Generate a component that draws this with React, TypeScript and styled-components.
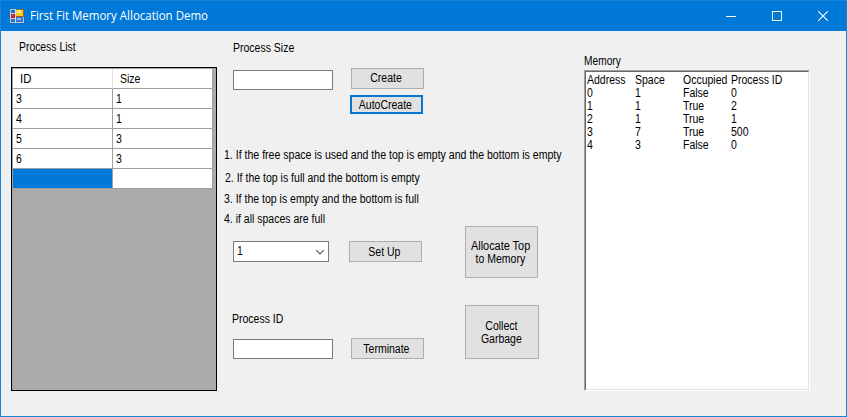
import React from 'react';
import styled, { createGlobalStyle } from 'styled-components';

const Global = createGlobalStyle`
  * { box-sizing: border-box; }
  html, body { margin: 0; padding: 0; }
  body { font: 12px/13px "Liberation Sans", Arial, sans-serif; color: #000; }
`;

const Window = styled.div`
  width: 847px;
  height: 417px;
  border: 1px solid #1883d7;
  background: #f0f0f0;
  overflow: hidden;
`;

const TitleBar = styled.header`
  display: flex;
  align-items: center;
  height: 30px;
  padding-left: 9px;
  background: #0078d7;
  color: #fff;
`;

const Title = styled.div<{ $scale: number }>`
  flex: 1;
  margin-left: 6px;
  font: 12px/16px "Open Sans", "Segoe UI", sans-serif;
  white-space: nowrap;
  transform: scaleX(${p => p.$scale});
  transform-origin: left;
`;

const Caption = styled.div`
  display: flex;
  width: 46px;
  height: 30px;
  align-items: center;
  justify-content: center;
`;

const Text = styled.span<{ $scale?: number; $origin?: string }>`
  display: block;
  height: 13px;
  white-space: nowrap;
  transform: scaleX(${p => p.$scale ?? 0.875});
  transform-origin: ${p => p.$origin ?? 'left'};
`;

const Body = styled.main`
  display: flex;
  align-items: flex-start;
  height: 385px;
`;

const ProcessPane = styled.section`
  width: 206px;
  margin: 10px 0 0 10px;
`;

const PaneLabel = styled.div<{ $left: number; $gap: number }>`
  padding-left: ${p => p.$left}px;
  margin-bottom: ${p => p.$gap}px;
`;

const DataGrid = styled.div`
  height: 324px;
  border: 1px solid #000;
  background: #ababab;
  padding: 1px 0 0 1px;
  box-shadow: inset 1px 1px #a0a0a0;
`;

const GridRow = styled.div`
  display: flex;
  width: 200px;
`;

const Cell = styled.div<{ $header?: boolean; $selected?: boolean }>`
  width: 100px;
  height: 20px;
  flex: none;
  padding: ${p => (p.$header ? '4px 0 0 7px' : '4px 0 0 3px')};
  border-right: 1px solid ${p => (p.$header ? '#e0e0e0' : '#a0a0a0')};
  border-bottom: 1px solid #a0a0a0;
  background: ${p => (p.$selected ? '#0078d7' : '#fff')};
  &:last-child { border-right-color: #a0a0a0; }
`;

const ControlPane = styled.section`
  width: 360px;
  margin: 11px 0 0 7px;
`;

const CreateRow = styled.div`
  display: flex;
  align-items: flex-start;
  padding: 13px 0 0 9px;
`;

const CreateButtons = styled.div`
  display: flex;
  flex-direction: column;
  gap: 6px;
  margin-left: 17px;
`;

const Field = styled.div<{ $top: number }>`
  width: 100px;
  height: 20px;
  margin-top: ${p => p.$top}px;
  border: 1px solid #7a7a7a;
  background: #fff;
`;

const Button = styled.div<{ $w?: number; $h?: number; $focus?: boolean; $x?: number; $drop?: number }>`
  display: flex;
  flex-direction: column;
  align-items: center;
  justify-content: center;
  flex: none;
  width: ${p => p.$w ?? 73}px;
  height: ${p => p.$h ?? 21}px;
  margin-left: ${p => p.$x ?? 0}px;
  padding-top: ${p => p.$drop ?? 0}px;
  padding-right: 2px;
  border: ${p => (p.$focus ? '2px solid #0078d7' : '1px solid #adadad')};
  background: #e1e1e1;
`;

const Notes = styled.div`
  margin-top: 35px;
`;

const Note = styled.div<{ $gap: number; $indent?: number }>`
  height: 13px;
  margin-bottom: ${p => p.$gap}px;
  padding-left: ${p => p.$indent ?? 0}px;
`;

const Actions = styled.div`
  display: flex;
  align-items: flex-start;
`;

const Inputs = styled.div`
  width: 200px;
  margin: 15px 0 0 9px;
`;

const InputRow = styled.div<{ $top?: number }>`
  display: flex;
  align-items: flex-start;
`;

const Combo = styled.div`
  display: flex;
  justify-content: space-between;
  width: 96px;
  height: 21px;
  padding: 3px 3px 0 3px;
  border: 1px solid #7a7a7a;
  background: #fff;
`;

const ProcessIdLabel = styled.div`
  margin: 51px 0 12px -1px;
`;

const BigButtons = styled.div`
  display: flex;
  flex-direction: column;
  gap: 27px;
  margin-left: 32px;
`;

const MemoryPane = styled.section`
  width: 226px;
  margin-top: 24px;
`;

const MemoryBox = styled.div`
  height: 321px;
  border: 1px solid;
  border-color: #a0a0a0 #fff #fff #a0a0a0;
  background: #fff;
`;

const MemoryInner = styled.div`
  height: 319px;
  padding: 2px 0 0 1px;
  border: 1px solid;
  border-color: #696969 #e3e3e3 #e3e3e3 #696969;
`;

const MemoryRow = styled.div`
  display: grid;
  grid-template-columns: 48px 48px 48px 76px;
  height: 13px;
`;

const processes = [['3', '1'], ['4', '1'], ['5', '3'], ['6', '3']];

const memory = [
  ['Address', 'Space', 'Occupied', 'Process ID'],
  ['0', '1', 'False', '0'],
  ['1', '1', 'True', '2'],
  ['2', '1', 'True', '1'],
  ['3', '7', 'True', '500'],
  ['4', '3', 'False', '0'],
];

const AppIcon = () => (
  <svg width="14" height="14" viewBox="0 0 14 14" shapeRendering="crispEdges">
    <rect width="14" height="14" fill="#b9c4d2" />
    <rect x="1" y="1" width="4" height="3" fill="#1676c8" />
    <rect x="1" y="10" width="4" height="3" fill="#1676c8" />
    <rect x="0" y="4" width="5" height="6" fill="#e7c9c5" />
    <rect x="1" y="5" width="4" height="4" fill="#b5202a" />
    <rect x="2" y="6" width="1" height="1" fill="#e98a80" />
    <rect x="6" y="0" width="8" height="8" fill="#8f6a20" />
    <rect x="6" y="1" width="7" height="6" fill="#f9c52c" />
    <rect x="7" y="1" width="4" height="3" fill="#ffe88c" />
    <rect x="6" y="8" width="7" height="5" fill="#3c74d8" />
    <rect x="7" y="9" width="4" height="2" fill="#8db6f4" />
    <rect x="5" y="0" width="1" height="14" fill="#d7dde5" />
  </svg>
);

export default function App() {
  return (
    <>
      <Global />
      <Window>
        <TitleBar>
          <AppIcon />
          <Title $scale={0.958}>First Fit Memory Allocation Demo</Title>
          <Caption>
            <svg width="10" height="10"><path d="M0 5.5H10" stroke="#fff" /></svg>
          </Caption>
          <Caption>
            <svg width="10" height="10"><path d="M.5 .5H9.5V9.5H.5Z" stroke="#fff" fill="none" /></svg>
          </Caption>
          <Caption>
            <svg width="10" height="10"><path d="M.3 .3L9.7 9.7M9.7 .3L.3 9.7" stroke="#fff" strokeWidth="1.1" /></svg>
          </Caption>
        </TitleBar>
        <Body>
          <ProcessPane>
            <PaneLabel $left={8} $gap={13}><Text $scale={0.865}>Process List</Text></PaneLabel>
            <DataGrid>
              <GridRow>
                <Cell $header><Text $scale={0.94}>ID</Text></Cell>
                <Cell $header><Text>Size</Text></Cell>
              </GridRow>
              {processes.map(([id, size]) => (
                <GridRow key={id}>
                  <Cell><Text>{id}</Text></Cell>
                  <Cell><Text>{size}</Text></Cell>
                </GridRow>
              ))}
              <GridRow><Cell $selected /><Cell /></GridRow>
            </DataGrid>
          </ProcessPane>

          <ControlPane>
            <PaneLabel $left={9} $gap={0}><Text>Process Size</Text></PaneLabel>
            <CreateRow>
              <Field $top={2} />
              <CreateButtons>
                <Button $x={1}><Text $origin="center">Create</Text></Button>
                <Button $h={19} $focus $drop={2}><Text $origin="center">AutoCreate</Text></Button>
              </CreateButtons>
            </CreateRow>
            <Notes>
              <Note $gap={10}><Text $scale={0.88}>1. If the free space is used and the top is empty and the bottom is empty</Text></Note>
              <Note $gap={8} $indent={1}><Text $scale={0.877}>2. If the top is full and the bottom is empty</Text></Note>
              <Note $gap={7}><Text $scale={0.877}>3. If the top is empty and the bottom is full</Text></Note>
              <Note $gap={0}><Text>4. if all spaces are full</Text></Note>
            </Notes>
            <Actions>
              <Inputs>
                <InputRow>
                  <Combo>
                    <Text>1</Text>
                    <svg width="10" height="13"><path d="M1.2 5.2L5 9L8.8 5.2" stroke="#555" fill="none" strokeWidth="1.2" /></svg>
                  </Combo>
                  <Button $x={20} $drop={2}><Text $origin="center">Set Up</Text></Button>
                </InputRow>
                <ProcessIdLabel><Text>Process ID</Text></ProcessIdLabel>
                <InputRow>
                  <Field $top={1} />
                  <Button $x={18} $drop={2}><Text $origin="center">Terminate</Text></Button>
                </InputRow>
              </Inputs>
              <BigButtons>
                <Button $h={52} $drop={2}>
                  <Text $origin="center" $scale={0.91}>Allocate Top</Text>
                  <Text $origin="center">to Memory</Text>
                </Button>
                <Button $w={74} $h={54} $drop={2}>
                  <Text $origin="center">Collect</Text>
                  <Text $origin="center">Garbage</Text>
                </Button>
              </BigButtons>
            </Actions>
          </ControlPane>

          <MemoryPane>
            <PaneLabel $left={0} $gap={2}><Text $scale={0.85}>Memory</Text></PaneLabel>
            <MemoryBox>
              <MemoryInner>
                {memory.map((row, i) => (
                  <MemoryRow key={i}>
                    {row.map((value, j) => <Text key={j}>{value}</Text>)}
                  </MemoryRow>
                ))}
              </MemoryInner>
            </MemoryBox>
          </MemoryPane>
        </Body>
      </Window>
    </>
  );
}
